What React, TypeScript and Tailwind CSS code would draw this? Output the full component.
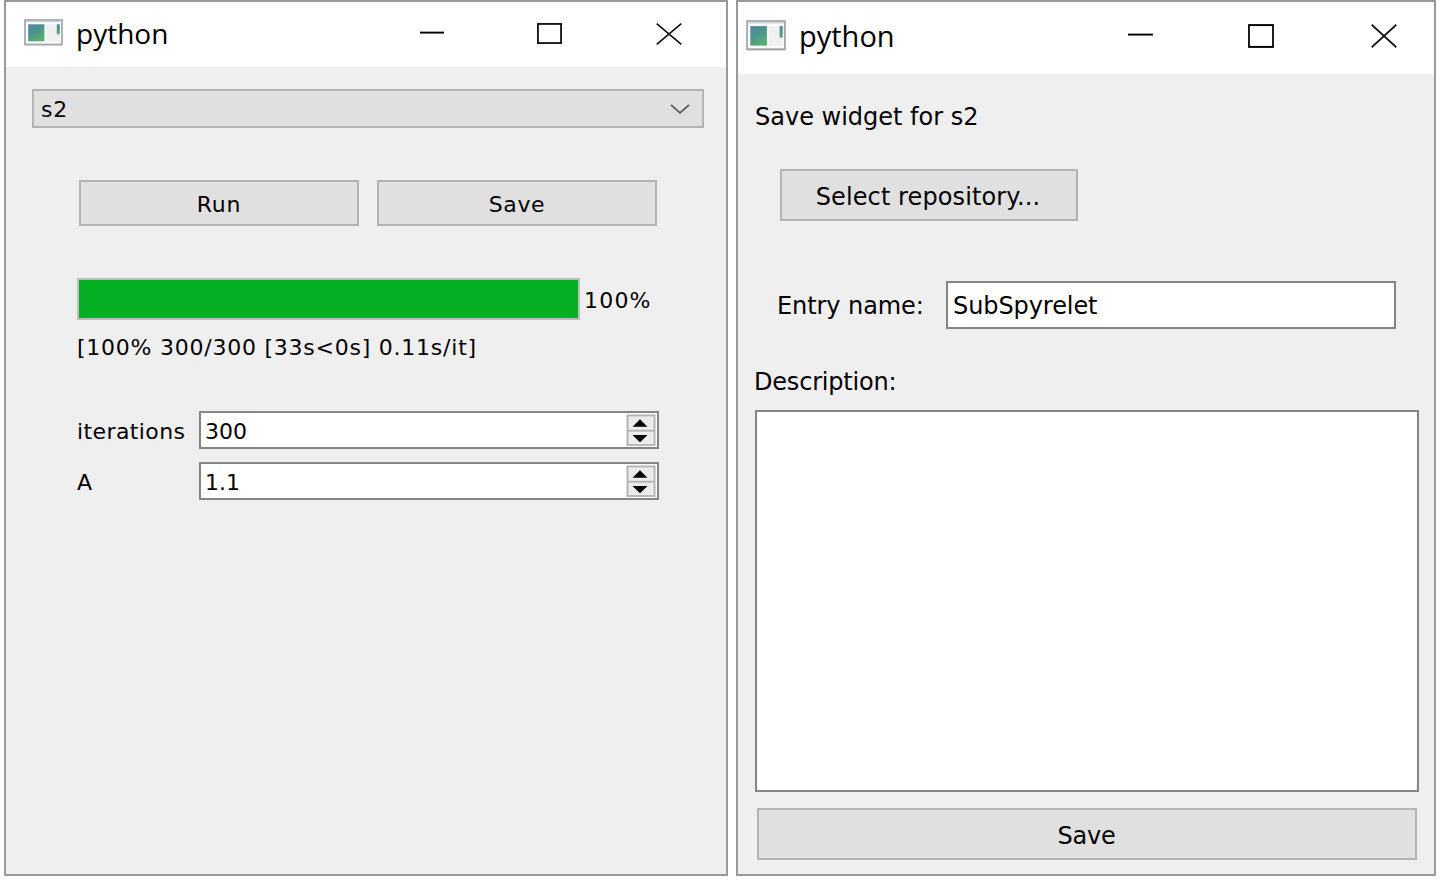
import type { ReactNode } from "react";

function AppIcon({ className, id }: { className: string; id: string }) {
  return (
    <svg className={className} viewBox="0 0 39 27" preserveAspectRatio="none" fill="none">
      <defs>
        <linearGradient id={id} x1="0" y1="0" x2="0.6" y2="1">
          <stop offset="0" stopColor="#5484a6" />
          <stop offset="0.5" stopColor="#4b948c" />
          <stop offset="1" stopColor="#57b070" />
        </linearGradient>
      </defs>
      <rect x="1" y="26" width="37" height="1" fill="#e4e6e7" />
      <rect x="1" y="1" width="37" height="24.5" fill="#fafafa" stroke="#a5abaf" strokeWidth="1.8" />
      <path d="M2 2.6h35" stroke="#c6ced3" strokeWidth="1" />
      <rect x="22" y="5.5" width="14" height="17" fill="#f0f0f1" />
      <rect x="4.2" y="5.3" width="16.2" height="17" fill={`url(#${id})`} />
      <rect x="32.8" y="5.3" width="3" height="10" fill={`url(#${id})`} />
    </svg>
  );
}

function Minimize({ className }: { className: string }) {
  return (
    <svg className={className} viewBox="0 0 25 24" preserveAspectRatio="none">
      <path d="M0 10.6h25" stroke="#000" strokeWidth="1.9" />
    </svg>
  );
}

function Maximize({ className }: { className: string }) {
  return (
    <svg className={className} viewBox="0 0 25 21" preserveAspectRatio="none">
      <rect x="0.95" y="0.95" width="23.1" height="19.1" fill="none" stroke="#000" strokeWidth="1.7" />
    </svg>
  );
}

function Close({ className }: { className: string }) {
  return (
    <svg className={className} viewBox="0 0 26 22" preserveAspectRatio="none">
      <path d="M0.7 0.7l24.6 20.6M25.3 0.7L0.7 21.3" stroke="#111" strokeWidth="1.7" />
    </svg>
  );
}

function Button({ className, children }: { className: string; children: ReactNode }) {
  return (
    <button className={`flex items-center justify-center border-2 border-[#b3b3b3] bg-[#e0e0e0] ${className}`}>
      {children}
    </button>
  );
}

function SpinBox({ label, value, tracking }: { label: string; value: string; tracking: string }) {
  return (
    <div className="flex h-[38px] items-center">
      <label className={`w-[122px] pt-[3px] ${tracking}`}>{label}</label>
      <div className="flex h-[38px] w-[460px] items-center justify-between border-2 border-[#858585] bg-white pl-1 pr-px">
        <span className="pt-[3px]">{value}</span>
        <svg className="h-8 w-[30px]" viewBox="0 0 30 32">
          <rect width="30" height="32" fill="#f0f0f0" />
          <rect x="1.5" y="1.5" width="27" height="29.5" fill="#ebebeb" stroke="#b3b3b3" strokeWidth="1.8" />
          <path d="M1 16.7h28" stroke="#b3b3b3" strokeWidth="1.8" />
          <path d="M6.5 12.7L14 5.3l7.5 7.4zM6.5 21L14 28.3 21.5 21z" fill="#000" />
        </svg>
      </div>
    </div>
  );
}

function RunWindow() {
  return (
    <section className="flex h-[876px] w-[724px] flex-col border-2 border-[#999] bg-[#efefef] text-[22px] leading-[30px]">
      <header className="flex h-[65px] shrink-0 items-start bg-white">
        <AppIcon id="run-icon" className="ml-[18px] mt-[17px] h-[27px] w-[39px]" />
        <h1 className="ml-[13px] mt-3 w-[342px] font-['Open_Sans'] text-[28px] leading-[38px]">python</h1>
        <Minimize className="ml-[2px] mt-5 h-6 w-6" />
        <Maximize className="ml-[93px] mt-[21px] h-[21px] w-[25px]" />
        <Close className="ml-[94px] mt-[21px] h-[22px] w-[26px]" />
      </header>
      <main className="flex flex-col">
        <div className="ml-[26px] mt-[22px] flex h-[39px] w-[672px] items-center justify-between border-2 border-[#b3b3b3] bg-[#e0e0e0] pl-[7px] pr-3">
          <span className="pt-0.5 tracking-[0.8px]">s2</span>
          <svg className="h-3 w-5" viewBox="0 0 20 12" fill="none">
            <path d="M1 1.8l9 8 9-8" stroke="#555" strokeWidth="1.7" />
          </svg>
        </div>
        <div className="ml-[73px] mt-[52px] flex gap-[18px]">
          <Button className="h-[46px] w-[280px] pt-1 tracking-[0.8px]">Run</Button>
          <Button className="h-[46px] w-[280px] pt-1 tracking-[0.6px]">Save</Button>
        </div>
        <div className="ml-[71px] mt-[52px] flex h-[42px] items-center">
          <div className="h-[42px] w-[503px] border-2 border-[#bcbcbc] bg-[#06b025]" />
          <span className="ml-1 pt-1 tracking-[1.2px]">100%</span>
        </div>
        <p className="ml-[71px] mt-[13px] tracking-[0.76px]">[100% 300/300 [33s&lt;0s] 0.11s/it]</p>
        <div className="ml-[71px] mt-12 flex flex-col gap-[13px]">
          <SpinBox label="iterations" value="300" tracking="tracking-[0.4px]" />
          <SpinBox label="A" value="1.1" tracking="tracking-normal" />
        </div>
      </main>
    </section>
  );
}

function SaveWindow() {
  return (
    <section className="flex h-[876px] w-[700px] flex-col border-2 border-[#999] bg-[#efefef] text-[24px] leading-[30px]">
      <header className="flex h-[72px] shrink-0 items-start bg-white">
        <AppIcon id="save-icon" className="ml-2 mt-[18px] h-[31px] w-10" />
        <h1 className="ml-[13px] mt-3.5 w-[327px] font-['Open_Sans'] text-[29px] leading-10">python</h1>
        <Minimize className="ml-[2px] mt-[22px] h-6 w-[25px]" />
        <Maximize className="ml-[95px] mt-[22px] h-6 w-[26px]" />
        <Close className="ml-[97px] mt-[22px] h-6 w-[26px]" />
      </header>
      <main className="flex flex-col items-start">
        <p className="ml-[17px] mt-7">Save widget for s2</p>
        <Button className="ml-[42px] mt-[37px] h-[52px] w-[298px] pr-0.5 pt-[3px] tracking-[0.1px]">Select repository...</Button>
        <div className="ml-[39px] mt-[60px] flex h-12 items-center">
          <label className="w-[169px] pt-0.5 tracking-[-0.08px]">Entry name:</label>
          <div className="flex h-12 w-[450px] items-center border-2 border-[#858585] bg-white pl-[5px] pt-0.5 tracking-[-0.08px]">
            SubSpyrelet
          </div>
        </div>
        <label className="ml-4 mt-[38px] tracking-[-0.2px]">Description:</label>
        <div className="ml-[17px] mt-[13px] h-[382px] w-[664px] border-2 border-[#858585] bg-white" />
        <Button className="ml-[19px] mt-4 h-[52px] w-[660px] pr-px pt-[3px] tracking-[-0.2px]">Save</Button>
      </main>
    </section>
  );
}

export default function App() {
  return (
    <div className="flex h-[882px] w-[1456px] gap-2 overflow-hidden bg-white pl-1 font-['DejaVu_Sans',Verdana,sans-serif] text-black">
      <RunWindow />
      <SaveWindow />
    </div>
  );
}
